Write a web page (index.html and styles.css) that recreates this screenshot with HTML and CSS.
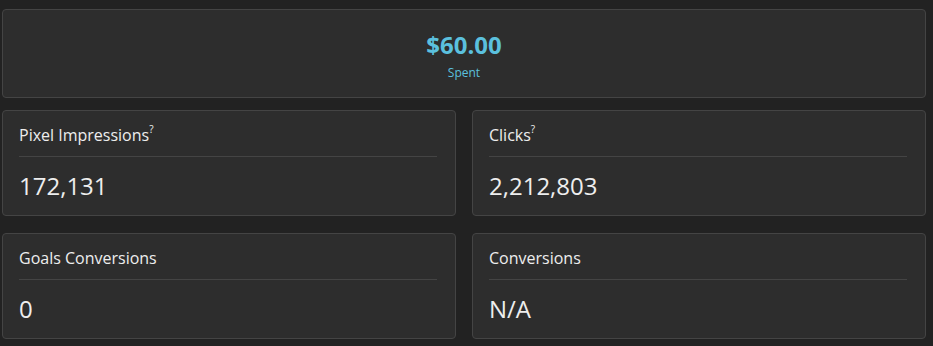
FILE: index.html
```html
<!DOCTYPE html>
<html lang="en">
<head>
  <meta charset="UTF-8">
  <title>Campaign Stats</title>
  <link rel="stylesheet" href="styles.css">
</head>
<body>
  <div class="stats">
    <div class="card spent-card">
      <div class="spent-amount">$60.00</div>
      <div class="spent-label">Spent</div>
    </div>

    <div class="stat-row first-row">
      <div class="card stat-card">
        <div class="stat-title">Pixel Impressions<sup class="hint">?</sup></div>
        <div class="stat-value">172,131</div>
      </div>
      <div class="card stat-card">
        <div class="stat-title">Clicks<sup class="hint">?</sup></div>
        <div class="stat-value">2,212,803</div>
      </div>
    </div>

    <div class="stat-row">
      <div class="card stat-card">
        <div class="stat-title">Goals Conversions</div>
        <div class="stat-value">0</div>
      </div>
      <div class="card stat-card">
        <div class="stat-title">Conversions</div>
        <div class="stat-value">N/A</div>
      </div>
    </div>
  </div>
</body>
</html>
```

FILE: styles.css
```css
body {
  background-color: #222222;
  color: #eeeeee;
  font-family: "Open Sans", "Liberation Sans", sans-serif;
  margin: 0;
}

.stats {
  padding: 9px 7px 8px 2px;
}

.card {
  background-color: #2d2d2d;
  border: 1px solid #444444;
  border-radius: 4px;
}

.spent-card {
  height: 87px;
  display: flex;
  flex-direction: column;
  align-items: center;
  justify-content: center;
  margin-bottom: 12px;
}

.spent-amount {
  color: #5bc0de;
  font-size: 24px;
  font-weight: bold;
  line-height: 32px;
  margin-top: 2px;
}

.spent-label {
  color: #5bc0de;
  font-size: 12px;
  line-height: 16px;
  margin-top: 4px;
}

.stat-row {
  display: grid;
  grid-template-columns: 1fr 1fr;
  gap: 16px;
}

.first-row {
  margin-bottom: 17px;
}

.stat-card {
  padding: 13px 17px 13px 16px;
}

.stat-title {
  font-size: 16px;
  line-height: 22px;
  padding-bottom: 10px;
  border-bottom: 1px solid #444444;
  margin-right: 1px;
}

.hint {
  font-size: 10px;
  line-height: 0;
  vertical-align: 8px;
}

.stat-value {
  font-size: 24px;
  line-height: 33px;
  margin-top: 12px;
}
```
